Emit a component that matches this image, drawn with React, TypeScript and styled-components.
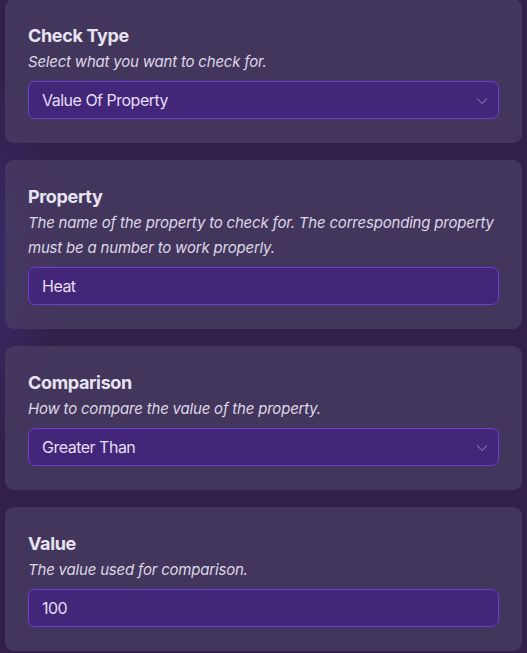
import React from "react";
import styled, { createGlobalStyle } from "styled-components";

const Global = createGlobalStyle`
  html, body { margin: 0; padding: 0; }
  body {
    width: 527px;
    height: 653px;
    overflow: hidden;
    background:
      radial-gradient(ellipse 60px 180px at 0px 260px, rgba(60, 50, 130, 0.55), rgba(60, 50, 130, 0) 100%),
      #31214a;
    font-family: Inter, "Noto Sans", sans-serif;
  }
`;

const Page = styled.div`
  display: flex;
  flex-direction: column;
  gap: 17px;
  padding: 0 5px 0 5px;
  margin-top: -1px;
`;

const Card = styled.section`
  background: rgba(72, 58, 98, 0.82);
  border-radius: 9px;
  padding: 24px 23px 24px 23px;
  display: flex;
  flex-direction: column;
`;

const Title = styled.h3`
  margin: 0;
  font-size: 18px;
  line-height: 26px;
  font-weight: 700;
  letter-spacing: -0.35px;
  color: #e8e3ef;
`;

const Desc = styled.p`
  margin: 0 0 7px 0;
  font-size: 15px;
  line-height: 25px;
  font-style: italic;
  color: #ddd7e6;
  letter-spacing: -0.2px;
`;

const Field = styled.div`
  height: 38px;
  box-sizing: border-box;
  border: 1px solid #6a40cf;
  border-radius: 7px;
  background: #42267a;
  display: flex;
  align-items: center;
  padding: 0 10px 0 13px;
  font-size: 16px;
  font-weight: 400;
  letter-spacing: -0.5px;
  color: #e6def3;
`;

const Value = styled.span`
  flex: 1;
`;

const Chevron = styled.svg`
  width: 12px;
  height: 8px;
  margin-top: 1px;
`;

type Item = { title: string; desc: string; value: string; select?: boolean };

const items: Item[] = [
  { title: "Check Type", desc: "Select what you want to check for.", value: "Value Of Property", select: true },
  {
    title: "Property",
    desc: "The name of the property to check for. The corresponding property must be a number to work properly.",
    value: "Heat",
  },
  { title: "Comparison", desc: "How to compare the value of the property.", value: "Greater Than", select: true },
  { title: "Value", desc: "The value used for comparison.", value: "100" },
];

export default function App() {
  return (
    <>
      <Global />
      <Page>
        {items.map((it) => (
          <Card key={it.title}>
            <Title>{it.title}</Title>
            <Desc>{it.desc}</Desc>
            <Field>
              <Value>{it.value}</Value>
              {it.select && (
                <Chevron viewBox="0 0 12 8">
                  <path d="M1 1.5 L6 6.5 L11 1.5" fill="none" stroke="#7d62b3" strokeWidth="1.1" />
                </Chevron>
              )}
            </Field>
          </Card>
        ))}
      </Page>
    </>
  );
}
